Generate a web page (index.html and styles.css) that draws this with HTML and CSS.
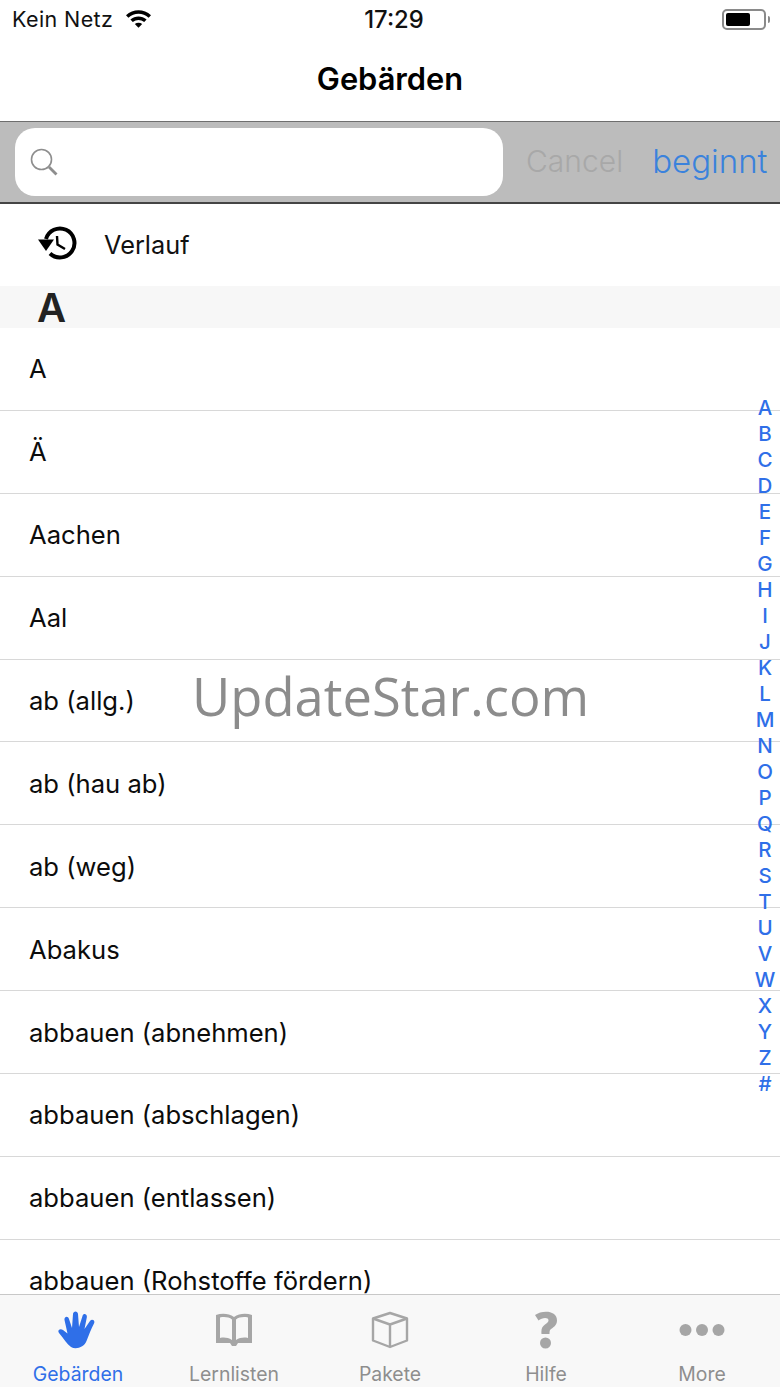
FILE: index.html
```html
<!DOCTYPE html>
<html lang="de">
<head>
    <meta charset="UTF-8">
    <meta name="viewport" content="width=device-width, initial-scale=1.0">
    <title>Gebärden</title>
    <link rel="stylesheet" href="styles.css">
</head>
<body>
    <div class="phone">
        <div class="status-bar">
            <div class="status-left">
                <span>Kein Netz</span>
                <svg class="wifi" width="27" height="20" viewBox="0 0 27 20">
                    <path d="M1 7.2 C8 0.6 19 0.6 26 7.2 L23.6 9.7 C17.8 4.4 9.2 4.4 3.4 9.7 Z" fill="#000"/>
                    <path d="M5.4 11.6 C10 7.6 17 7.6 21.6 11.6 L19.2 14.1 C15.8 11.2 11.2 11.2 7.8 14.1 Z" fill="#000"/>
                    <path d="M9.8 16 C12 14.4 15 14.4 17.2 16 L13.5 19.8 Z" fill="#000"/>
                </svg>
            </div>
            <div class="status-time">17:29</div>
            <div class="status-right">
                <div class="battery"><div class="battery-level"></div></div>
                <div class="battery-tip"></div>
            </div>
        </div>

        <div class="nav-bar">Gebärden</div>

        <div class="search-bar">
            <div class="search-field">
                <svg width="30" height="30" viewBox="0 0 30 30" fill="none" stroke="#8e8e8e">
                    <circle cx="12.5" cy="12.5" r="10" stroke-width="1.6"/>
                    <path d="M20 20 L27.5 27.5" stroke-width="2.8"/>
                </svg>
            </div>
            <span class="search-cancel">Cancel</span>
            <span class="search-scope">beginnt</span>
        </div>

        <div class="history-row">
            <svg width="40" height="36" viewBox="0 0 40 36">
                <path d="M8 13 A14.5 14.5 0 1 1 12 27.5" fill="none" stroke="#000" stroke-width="4"/>
                <path d="M0 13.5 L16 13.5 L8 25 Z" fill="#000"/>
                <path d="M19 10 L19.5 18.500 L27 23" fill="none" stroke="#000" stroke-width="2.4"/>
            </svg>
            <span>Verlauf</span>
        </div>

        <div class="section-head">A</div>

        <div class="list">
            <div class="list-row">A</div>
            <div class="list-row">Ä</div>
            <div class="list-row">Aachen</div>
            <div class="list-row">Aal</div>
            <div class="list-row">ab (allg.)</div>
            <div class="list-row">ab (hau ab)</div>
            <div class="list-row">ab (weg)</div>
            <div class="list-row">Abakus</div>
            <div class="list-row">abbauen (abnehmen)</div>
            <div class="list-row">abbauen (abschlagen)</div>
            <div class="list-row">abbauen (entlassen)</div>
            <div class="list-row">abbauen (Rohstoffe fördern)</div>
        </div>

        <div class="tab-bar">
            <div class="tab active">
                <svg width="40" height="38" viewBox="0 0 40 38" fill="#2f6fe8">
                    <path d="M13 36 C9 33 6 28 1 22 C-1 19.500 2 17 5 19 L9.500 22.500 L6.500 9 C6 5.500 10 4.500 11 8 L14 17 L15 3 C15.200 -0.500 19.800 -0.500 20 3 L21 16 L24.500 5 C25.500 1.500 29.500 3 28.800 6.500 L26.500 18 L32 10 C34 7.500 37.500 9.500 36 12.500 C33 18 31 24 28.500 30 C26.500 36 18 39 13 36 Z"/>
                </svg>
                <span>Gebärden</span>
            </div>
            <div class="tab">
                <svg width="38" height="36" viewBox="0 0 38 36" fill="#a6a6a6">
                    <path fill-rule="evenodd" d="M1 3 C7 1 14 1.500 19 5 C24 1.500 31 1 37 3 L37 31 L23 31 L21 34 L17 34 L15 31 L1 31 Z M5 5.500 L5 26 C9 25 13 25.500 17 28 L17 7.500 C14 5 9 4.500 5 5.500 Z M33 5.500 L33 26 C29 25 25 25.500 21 28 L21 7.500 C24 5 29 4.500 33 5.500 Z"/>
                </svg>
                <span>Lernlisten</span>
            </div>
            <div class="tab">
                <svg width="38" height="37" viewBox="0 0 38 37" fill="none" stroke="#a6a6a6" stroke-width="2.4" stroke-linejoin="round">
                    <path d="M19 1.500 L36 7 L36 29 L19 35.500 L2 29 L2 7 Z"/>
                    <path d="M2 7 L19 13 L36 7 M19 13 L19 35.500"/>
                </svg>
                <span>Pakete</span>
            </div>
            <div class="tab">
                <svg width="24" height="38" viewBox="0 0 24 38" fill="#a6a6a6">
                    <path d="M1 4 C8 -1 23 -1 23 9.500 C23 14.500 19 16.500 16.500 18.500 C15.500 19.500 15.500 21 15.500 23 L7.500 23 C7 18.500 8 15.500 11 13.500 C13 12 14.500 11 14.500 9.500 C14.500 6 8 6.500 4.500 9.500 Z"/>
                    <circle cx="11.500" cy="32" r="5.500"/>
                </svg>
                <span>Hilfe</span>
            </div>
            <div class="tab">
                <svg width="46" height="38" viewBox="0 0 46 38" fill="#a6a6a6">
                    <circle cx="6.500" cy="19" r="6"/>
                    <circle cx="23" cy="19" r="6"/>
                    <circle cx="39.500" cy="19" r="6"/>
                </svg>
                <span>More</span>
            </div>
        </div>

        <div class="index-strip">
            <span>A</span><span>B</span><span>C</span><span>D</span><span>E</span><span>F</span><span>G</span><span>H</span><span>I</span><span>J</span><span>K</span><span>L</span><span>M</span><span>N</span><span>O</span><span>P</span><span>Q</span><span>R</span><span>S</span><span>T</span><span>U</span><span>V</span><span>W</span><span>X</span><span>Y</span><span>Z</span><span>#</span>
        </div>

        <div class="watermark">UpdateStar.com</div>
    </div>
</body>
</html>
```

FILE: styles.css
```css
body {
    margin: 0;
    font-family: 'Inter', 'Liberation Sans', sans-serif;
    background-color: #fff;
    color: #000;
}
.phone {
    position: relative;
    width: 780px;
    height: 1387px;
    display: flex;
    flex-direction: column;
    overflow: hidden;
}
.status-bar {
    height: 38px;
    flex: none;
    display: flex;
    align-items: center;
    justify-content: space-between;
    padding: 0 12px;
    font-size: 21.5px;
    letter-spacing: 0.4px;
    color: #111;
    position: relative;
    margin-bottom: 2px;
}
.status-left {
    display: flex;
    align-items: center;
    gap: 12px;
}
.wifi {
    margin-top: -3px;
}
.status-time {
    position: absolute;
    left: 0;
    right: 0;
    text-align: center;
    font-weight: 500;
    font-size: 23.8px;
    letter-spacing: 0;
    padding-left: 8px;
    box-sizing: border-box;
}
.status-right {
    display: flex;
    align-items: center;
    margin-right: -2px;
}
.battery {
    border: 2px solid #8a8a8a;
    border-radius: 5px;
    padding: 2px;
    width: 36px;
    height: 13px;
}
.battery-level {
    width: 24px;
    height: 100%;
    background-color: #000;
    border-radius: 2px;
}
.battery-tip {
    width: 2px;
    height: 7px;
    margin-left: 2px;
    background-color: #8a8a8a;
    border-radius: 0 2px 2px 0;
}
.nav-bar {
    height: 81px;
    flex: none;
    display: flex;
    align-items: center;
    justify-content: center;
    padding-bottom: 4px;
    box-sizing: border-box;
    font-size: 30.8px;
    font-weight: 600;
}
.search-bar {
    height: 83px;
    flex: none;
    box-sizing: border-box;
    display: flex;
    align-items: center;
    background-color: #bcbcbc;
    border-top: 1px solid #6e6e6e;
    border-bottom: 2px solid #444;
    padding: 0 12px 0 15px;
}
.search-field {
    width: 488px;
    height: 68px;
    background-color: #fff;
    border-radius: 20px;
    display: flex;
    align-items: center;
    padding-left: 14px;
    box-sizing: border-box;
    margin-right: 23px;
}
.search-cancel {
    font-size: 30px;
    color: #a8a8a8;
    margin-right: 29px;
    font-weight: 300;
    padding-bottom: 2px;
}
.search-scope {
    font-size: 33px;
    color: #3a82dc;
    font-weight: 300;
    padding-bottom: 2px;
}
.history-row {
    height: 82px;
    flex: none;
    display: flex;
    align-items: center;
    padding: 0 0 2px 38px;
    box-sizing: border-box;
    gap: 26px;
    font-size: 25.3px;
    color: #111;
}
.section-head {
    height: 42px;
    flex: none;
    background-color: #f7f7f7;
    padding-left: 37px;
    font-size: 40px;
    font-weight: 600;
    line-height: 44px;
    color: #222;
}
.list {
    flex: 1;
    overflow: hidden;
}
.list-row {
    height: 82.9px;
    box-sizing: border-box;
    padding: 0 0 0 29px;
    display: flex;
    align-items: center;
    font-size: 25.6px;
    color: #0c0c0c;
    border-bottom: 1px solid #d8d8d8;
}
.tab-bar {
    height: 93px;
    flex: none;
    box-sizing: border-box;
    display: flex;
    background-color: #f8f8f8;
    border-top: 1px solid #c8c8c8;
    position: relative;
}
.tab {
    flex: 1;
    display: flex;
    flex-direction: column;
    align-items: center;
    justify-content: flex-end;
    padding-bottom: 1px;
    gap: 13px;
    font-size: 19.4px;
    color: #8e8e8e;
}
.tab svg {
    height: 38px;
}
.tab.active {
    color: #2f6fe8;
}
.index-strip {
    position: absolute;
    top: 395px;
    right: 0;
    width: 30px;
    display: flex;
    flex-direction: column;
    align-items: center;
    font-size: 20.5px;
    font-weight: 500;
    color: #2f6fe8;
}
.index-strip span {
    height: 26px;
    line-height: 25px;
}
.watermark {
    position: absolute;
    top: 660px;
    left: 192px;
    font-family: 'Open Sans', sans-serif;
    font-size: 52.5px;
    color: #8c8c8c;
    white-space: nowrap;
}
```
